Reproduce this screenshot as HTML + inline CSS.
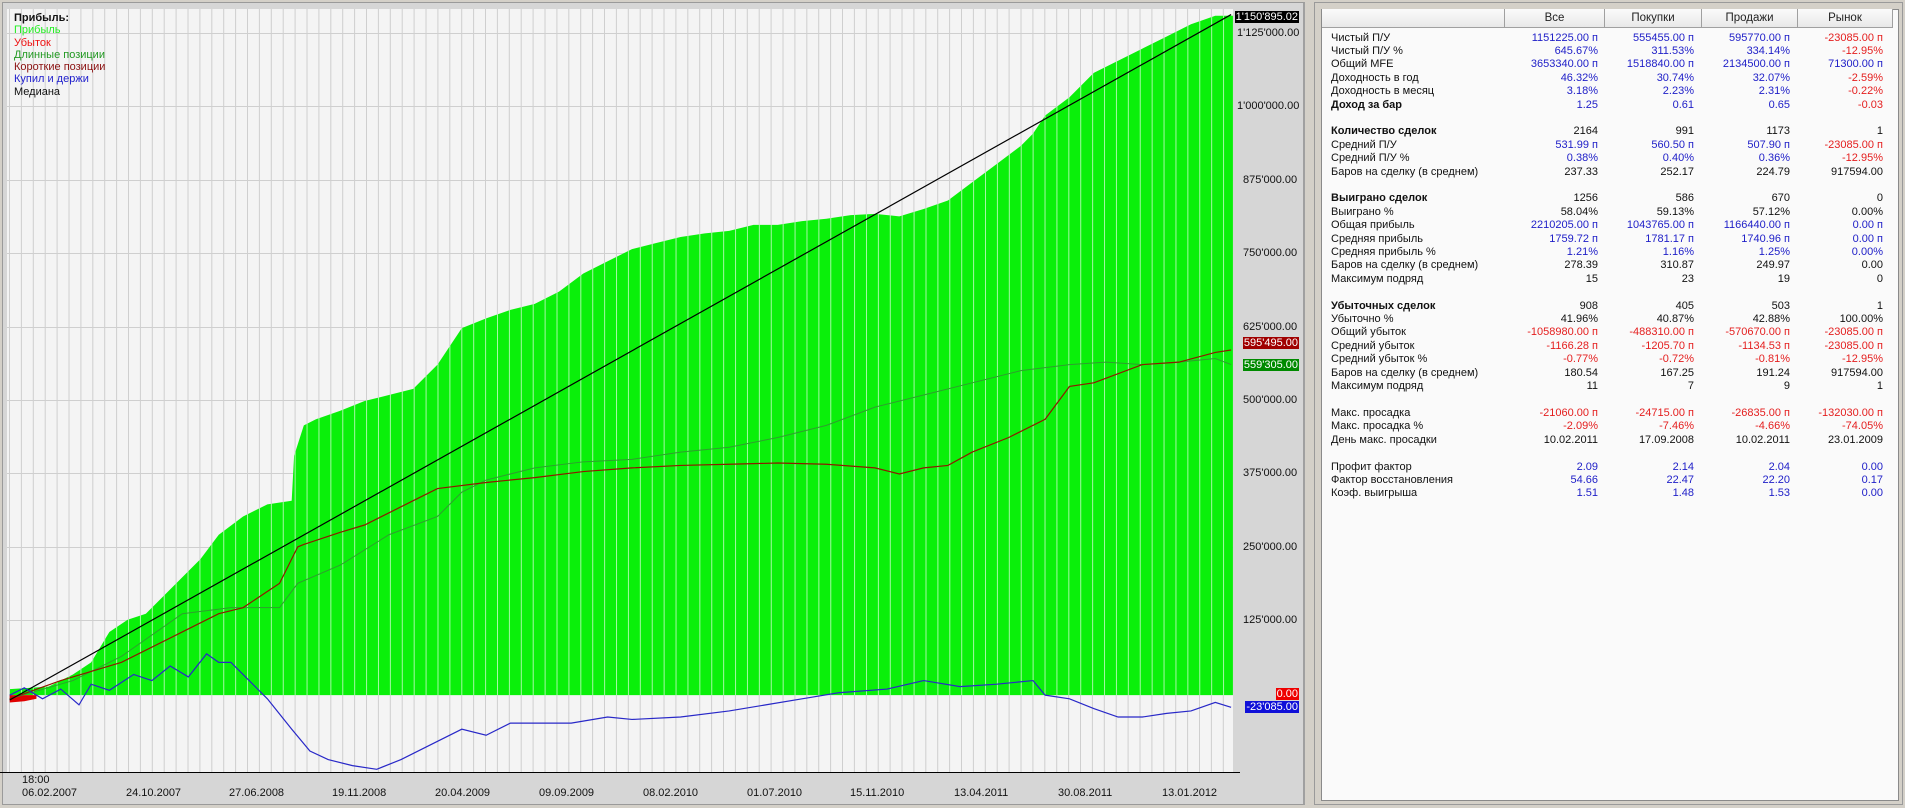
<!DOCTYPE html>
<html><head><meta charset="utf-8">
<style>
*{margin:0;padding:0;box-sizing:border-box}
body{width:1905px;height:808px;background:#d4d0c8;position:relative;overflow:hidden;font-family:"Liberation Sans",Tahoma,sans-serif;font-size:11px}
.lp{position:absolute;left:2px;top:2px;width:1303px;height:803px;background:#d6d6d6;border:1px solid #9a9a9a;border-right:2px solid #a0a0a0}
.ax{position:absolute;font-size:11px;color:#111;left:1237px;white-space:nowrap;line-height:12px}
.tag{position:absolute;right:606px;color:#fff;font-size:11px;line-height:12px;padding:0 1px;white-space:nowrap}
.dt{position:absolute;top:787px;font-size:11px;color:#111}
.rp{position:absolute;left:1314px;top:2px;width:589px;height:803px;background:#d4d0c8;border:1px solid #9a9a9a}
.wt{position:absolute;left:1321px;top:9px;width:578px;height:792px;background:#fafafa;border:1px solid #8a8a8a}
.hd{position:absolute;top:9px;height:19px;background:linear-gradient(#fbfbfb,#e8e8e8);border-right:1px solid #a0a0a0;border-bottom:1px solid #a0a0a0;text-align:center;line-height:18px;font-size:11.5px;color:#222}
.rows{position:absolute;left:1322px;top:31.5px;width:578px}
.r{height:13.42px;line-height:13.42px;display:flex;font-size:11px;white-space:nowrap}
.r span{display:block}
.r .l{width:183px;padding-left:9px;color:#111}
.r .c1{width:100px;text-align:right;padding-right:7px}
.r .c2{width:97px;text-align:right;padding-right:8px}
.r .c3{width:96px;text-align:right;padding-right:8px}
.r .c4{width:95px;text-align:right;padding-right:10px}
.b{color:#2020c8}.rd{color:#e41e1e}.k{color:#111}
.bl{font-weight:bold}
</style></head><body>
<div class="lp"></div>
<svg style="position:absolute;left:0;top:0" width="1240" height="775">
<defs>
<pattern id="gp" patternUnits="userSpaceOnUse" width="11.9" height="20" x="9"><rect width="11.9" height="20" fill="#f4f4f4"/><rect x="0" width="1" height="20" fill="#cfcfcf"/></pattern>
<pattern id="gg" patternUnits="userSpaceOnUse" width="9.794" height="20" x="7.4"><rect width="9.794" height="20" fill="#0af00a"/><rect x="0" width="0.82" height="20" fill="#a6f8a6"/></pattern>
</defs>
<rect x="7" y="9" width="1226" height="763" fill="url(#gp)"/>
<g stroke="#cfcfcf" stroke-width="1">
<line x1="7" x2="1233" y1="33.5" y2="33.5"/><line x1="7" x2="1233" y1="106.5" y2="106.5"/><line x1="7" x2="1233" y1="180.5" y2="180.5"/><line x1="7" x2="1233" y1="253.5" y2="253.5"/><line x1="7" x2="1233" y1="327.5" y2="327.5"/><line x1="7" x2="1233" y1="400.5" y2="400.5"/><line x1="7" x2="1233" y1="473.5" y2="473.5"/><line x1="7" x2="1233" y1="547.5" y2="547.5"/><line x1="7" x2="1233" y1="620.5" y2="620.5"/>
</g>
<g transform="scale(1.2153)">
<polygon fill="url(#gg)" points="8,572 8,567 40,565 60,555 75,545 90,520 105,510 120,505 135,490 150,475 165,460 180,440 200,425 220,415 240,412 242,375 250,350 260,345 280,338 300,330 320,325 340,320 360,300 380,270 400,262 420,255 440,250 460,240 480,225 500,215 520,205 540,200 560,195 580,192 600,190 620,185 640,185 660,182 680,180 700,177 720,176 740,178 760,172 780,165 800,150 820,135 840,120 850,110 860,95 880,80 900,60 920,50 940,40 960,30 980,20 1000,13 1014.5,13 1014.5,572"/>
<polygon fill="#e00000" points="8,572 30,572 30,575 20,577 8,578"/>
<g fill="none">
<polyline vector-effect="non-scaling-stroke" stroke="#2f9e2f" stroke-width="1" points="8,575 60,560 100,540 150,505 190,500 230,500 245,480 280,465 320,440 360,425 380,405 400,395 440,385 480,380 520,378 560,372 600,368 640,360 680,350 720,335 760,325 800,315 840,305 880,300 910,298 940,300 970,298 1000,295 1013,300"/>
<polyline vector-effect="non-scaling-stroke" stroke="#8e1a00" stroke-width="1.2" points="8,575 50,560 100,545 150,520 180,505 200,500 230,480 245,450 250,448 280,438 300,432 340,412 360,402 400,397 440,393 480,388 520,385 560,383 600,382 640,381 680,382 720,385 740,390 760,385 780,383 800,372 830,360 860,345 880,318 900,315 940,300 970,298 1000,290 1013,288"/>
<line vector-effect="non-scaling-stroke" stroke="#000" stroke-width="1.2" x1="8" y1="576" x2="1013" y2="12"/>
<polyline vector-effect="non-scaling-stroke" stroke="#2828c8" stroke-width="1.2" points="8,572 20,566 35,575 50,567 65,580 75,563 90,568 110,555 125,560 140,548 155,557 170,538 180,545 190,545 205,560 220,575 240,600 255,618 270,625 290,630 310,633 330,625 360,610 380,600 400,605 420,595 440,595 470,595 500,590 520,592 560,590 600,585 630,580 660,575 690,570 730,567 760,560 790,565 820,563 850,560 860,572 880,575 900,583 920,590 940,590 960,587 980,585 1000,578 1013,582"/>
</g>
</g>
<line x1="0" x2="1240" y1="772.5" y2="772.5" stroke="#000" stroke-width="1"/>
</svg>
<div style="position:absolute;left:1233px;top:9px;width:70px;height:763px;background:#d6d6d6"></div>
<div style="position:absolute;left:0;top:772px;width:1240px;height:1px;background:#000"></div>
<div class="ax" style="top:27px">1'125'000.00</div>
<div class="ax" style="top:100px">1'000'000.00</div>
<div class="ax" style="top:174px;left:1243px">875'000.00</div>
<div class="ax" style="top:247px;left:1243px">750'000.00</div>
<div class="ax" style="top:321px;left:1243px">625'000.00</div>
<div class="ax" style="top:394px;left:1243px">500'000.00</div>
<div class="ax" style="top:467px;left:1243px">375'000.00</div>
<div class="ax" style="top:541px;left:1243px">250'000.00</div>
<div class="ax" style="top:614px;left:1243px">125'000.00</div>
<div class="tag" style="top:11px;background:#000">1'150'895.02</div>
<div class="tag" style="top:337px;background:#a00000">595'495.00</div>
<div class="tag" style="top:359px;background:#008a00">559'305.00</div>
<div class="tag" style="top:688px;background:#ee0000">0.00</div>
<div class="tag" style="top:701px;background:#1010d8">-23'085.00</div>
<div style="position:absolute;left:14px;top:12px;line-height:12.3px;font-size:11px">
<div style="font-weight:bold;color:#111">Прибыль:</div>
<div style="color:#22ee22">Прибыль</div>
<div style="color:#ee1111">Убыток</div>
<div style="color:#229922">Длинные позиции</div>
<div style="color:#8b1010">Короткие позиции</div>
<div style="color:#2020cc">Купил и держи</div>
<div style="color:#111">Медиана</div>
</div>
<div class="dt" style="top:774px;left:22px">18:00</div>
<div class="dt" style="left:22px">06.02.2007</div>
<div class="dt" style="left:126px">24.10.2007</div>
<div class="dt" style="left:229px">27.06.2008</div>
<div class="dt" style="left:332px">19.11.2008</div>
<div class="dt" style="left:435px">20.04.2009</div>
<div class="dt" style="left:539px">09.09.2009</div>
<div class="dt" style="left:643px">08.02.2010</div>
<div class="dt" style="left:747px">01.07.2010</div>
<div class="dt" style="left:850px">15.11.2010</div>
<div class="dt" style="left:954px">13.04.2011</div>
<div class="dt" style="left:1058px">30.08.2011</div>
<div class="dt" style="left:1162px">13.01.2012</div>

<div class="rp"></div>
<div class="wt"></div>
<div class="hd" style="left:1322px;width:183px"></div>
<div class="hd" style="left:1505px;width:100px">Все</div>
<div class="hd" style="left:1605px;width:97px">Покупки</div>
<div class="hd" style="left:1702px;width:96px">Продажи</div>
<div class="hd" style="left:1798px;width:95px">Рынок</div>
<div class="rows">
<div class="r"><span class="l">Чистый П/У</span><span class="c1 b">1151225.00 п</span><span class="c2 b">555455.00 п</span><span class="c3 b">595770.00 п</span><span class="c4 rd">-23085.00 п</span></div>
<div class="r"><span class="l">Чистый П/У %</span><span class="c1 b">645.67%</span><span class="c2 b">311.53%</span><span class="c3 b">334.14%</span><span class="c4 rd">-12.95%</span></div>
<div class="r"><span class="l">Общий MFE</span><span class="c1 b">3653340.00 п</span><span class="c2 b">1518840.00 п</span><span class="c3 b">2134500.00 п</span><span class="c4 b">71300.00 п</span></div>
<div class="r"><span class="l">Доходность в год</span><span class="c1 b">46.32%</span><span class="c2 b">30.74%</span><span class="c3 b">32.07%</span><span class="c4 rd">-2.59%</span></div>
<div class="r"><span class="l">Доходность в месяц</span><span class="c1 b">3.18%</span><span class="c2 b">2.23%</span><span class="c3 b">2.31%</span><span class="c4 rd">-0.22%</span></div>
<div class="r"><span class="l bl">Доход за бар</span><span class="c1 b">1.25</span><span class="c2 b">0.61</span><span class="c3 b">0.65</span><span class="c4 rd">-0.03</span></div>
<div class="r"></div>
<div class="r"><span class="l bl">Количество сделок</span><span class="c1 k">2164</span><span class="c2 k">991</span><span class="c3 k">1173</span><span class="c4 k">1</span></div>
<div class="r"><span class="l">Средний П/У</span><span class="c1 b">531.99 п</span><span class="c2 b">560.50 п</span><span class="c3 b">507.90 п</span><span class="c4 rd">-23085.00 п</span></div>
<div class="r"><span class="l">Средний П/У %</span><span class="c1 b">0.38%</span><span class="c2 b">0.40%</span><span class="c3 b">0.36%</span><span class="c4 rd">-12.95%</span></div>
<div class="r"><span class="l">Баров на сделку (в среднем)</span><span class="c1 k">237.33</span><span class="c2 k">252.17</span><span class="c3 k">224.79</span><span class="c4 k">917594.00</span></div>
<div class="r"></div>
<div class="r"><span class="l bl">Выиграно сделок</span><span class="c1 k">1256</span><span class="c2 k">586</span><span class="c3 k">670</span><span class="c4 k">0</span></div>
<div class="r"><span class="l">Выиграно %</span><span class="c1 k">58.04%</span><span class="c2 k">59.13%</span><span class="c3 k">57.12%</span><span class="c4 k">0.00%</span></div>
<div class="r"><span class="l">Общая прибыль</span><span class="c1 b">2210205.00 п</span><span class="c2 b">1043765.00 п</span><span class="c3 b">1166440.00 п</span><span class="c4 b">0.00 п</span></div>
<div class="r"><span class="l">Средняя прибыль</span><span class="c1 b">1759.72 п</span><span class="c2 b">1781.17 п</span><span class="c3 b">1740.96 п</span><span class="c4 b">0.00 п</span></div>
<div class="r"><span class="l">Средняя прибыль %</span><span class="c1 b">1.21%</span><span class="c2 b">1.16%</span><span class="c3 b">1.25%</span><span class="c4 b">0.00%</span></div>
<div class="r"><span class="l">Баров на сделку (в среднем)</span><span class="c1 k">278.39</span><span class="c2 k">310.87</span><span class="c3 k">249.97</span><span class="c4 k">0.00</span></div>
<div class="r"><span class="l">Максимум подряд</span><span class="c1 k">15</span><span class="c2 k">23</span><span class="c3 k">19</span><span class="c4 k">0</span></div>
<div class="r"></div>
<div class="r"><span class="l bl">Убыточных сделок</span><span class="c1 k">908</span><span class="c2 k">405</span><span class="c3 k">503</span><span class="c4 k">1</span></div>
<div class="r"><span class="l">Убыточно %</span><span class="c1 k">41.96%</span><span class="c2 k">40.87%</span><span class="c3 k">42.88%</span><span class="c4 k">100.00%</span></div>
<div class="r"><span class="l">Общий убыток</span><span class="c1 rd">-1058980.00 п</span><span class="c2 rd">-488310.00 п</span><span class="c3 rd">-570670.00 п</span><span class="c4 rd">-23085.00 п</span></div>
<div class="r"><span class="l">Средний убыток</span><span class="c1 rd">-1166.28 п</span><span class="c2 rd">-1205.70 п</span><span class="c3 rd">-1134.53 п</span><span class="c4 rd">-23085.00 п</span></div>
<div class="r"><span class="l">Средний убыток %</span><span class="c1 rd">-0.77%</span><span class="c2 rd">-0.72%</span><span class="c3 rd">-0.81%</span><span class="c4 rd">-12.95%</span></div>
<div class="r"><span class="l">Баров на сделку (в среднем)</span><span class="c1 k">180.54</span><span class="c2 k">167.25</span><span class="c3 k">191.24</span><span class="c4 k">917594.00</span></div>
<div class="r"><span class="l">Максимум подряд</span><span class="c1 k">11</span><span class="c2 k">7</span><span class="c3 k">9</span><span class="c4 k">1</span></div>
<div class="r"></div>
<div class="r"><span class="l">Макс. просадка</span><span class="c1 rd">-21060.00 п</span><span class="c2 rd">-24715.00 п</span><span class="c3 rd">-26835.00 п</span><span class="c4 rd">-132030.00 п</span></div>
<div class="r"><span class="l">Макс. просадка %</span><span class="c1 rd">-2.09%</span><span class="c2 rd">-7.46%</span><span class="c3 rd">-4.66%</span><span class="c4 rd">-74.05%</span></div>
<div class="r"><span class="l">День макс. просадки</span><span class="c1 k">10.02.2011</span><span class="c2 k">17.09.2008</span><span class="c3 k">10.02.2011</span><span class="c4 k">23.01.2009</span></div>
<div class="r"></div>
<div class="r"><span class="l">Профит фактор</span><span class="c1 b">2.09</span><span class="c2 b">2.14</span><span class="c3 b">2.04</span><span class="c4 b">0.00</span></div>
<div class="r"><span class="l">Фактор восстановления</span><span class="c1 b">54.66</span><span class="c2 b">22.47</span><span class="c3 b">22.20</span><span class="c4 b">0.17</span></div>
<div class="r"><span class="l">Коэф. выигрыша</span><span class="c1 b">1.51</span><span class="c2 b">1.48</span><span class="c3 b">1.53</span><span class="c4 b">0.00</span></div>
</div>
</body></html>
